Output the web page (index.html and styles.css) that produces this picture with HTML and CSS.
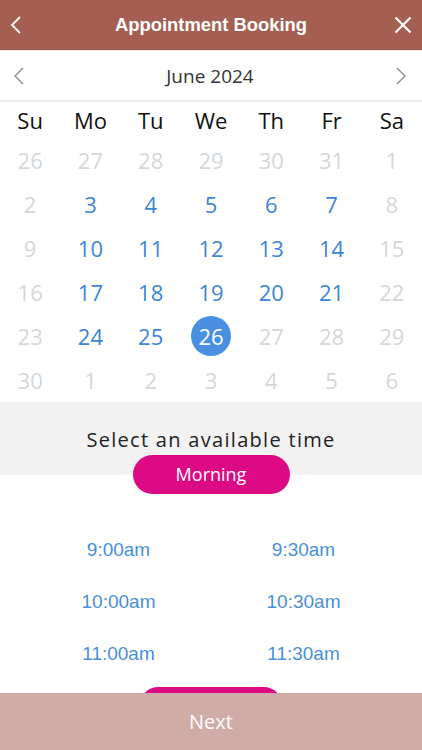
FILE: index.html
```html
<!DOCTYPE html>
<html lang="en">
<head>
  <meta charset="UTF-8" />
  <meta name="viewport" content="width=device-width, initial-scale=1" />
  <title>Appointment Booking</title>
  <link rel="stylesheet" href="styles.css">
</head>
<body>
  <!-- TOP BAR -->
  <header class="topbar">
    <span class="topbar-btn">
      <svg width="12" height="18" viewBox="0 0 12 18"><path d="M10 1 L2 9 L10 17" fill="none" stroke="#fff" stroke-width="1.8"/></svg>
    </span>
    <h1>Appointment Booking</h1>
    <span class="topbar-btn">
      <svg width="18" height="18" viewBox="0 0 18 18"><path d="M1.5 1.5 L16.5 16.5 M16.5 1.5 L1.5 16.5" fill="none" stroke="#fff" stroke-width="2.2"/></svg>
    </span>
  </header>

  <!-- MONTH SWITCHER -->
  <div class="month-bar">
    <span class="month-arrow">
      <svg width="10" height="18" viewBox="0 0 10 18"><path d="M9 1 L1 9 L9 17" fill="none" stroke="#8a8a8a" stroke-width="1.3"/></svg>
    </span>
    <span class="month-title">June 2024</span>
    <span class="month-arrow">
      <svg width="10" height="18" viewBox="0 0 10 18"><path d="M1 1 L9 9 L1 17" fill="none" stroke="#8a8a8a" stroke-width="1.3"/></svg>
    </span>
  </div>

  <!-- CALENDAR -->
  <div class="calendar">
    <div class="weekday">Su</div><div class="weekday">Mo</div><div class="weekday">Tu</div><div class="weekday">We</div><div class="weekday">Th</div><div class="weekday">Fr</div><div class="weekday">Sa</div>

    <div class="day off">26</div><div class="day off">27</div><div class="day off">28</div><div class="day off">29</div><div class="day off">30</div><div class="day off">31</div><div class="day off">1</div>
    <div class="day off">2</div><div class="day">3</div><div class="day">4</div><div class="day">5</div><div class="day">6</div><div class="day">7</div><div class="day off">8</div>
    <div class="day off">9</div><div class="day">10</div><div class="day">11</div><div class="day">12</div><div class="day">13</div><div class="day">14</div><div class="day off">15</div>
    <div class="day off">16</div><div class="day">17</div><div class="day">18</div><div class="day">19</div><div class="day">20</div><div class="day">21</div><div class="day off">22</div>
    <div class="day off">23</div><div class="day">24</div><div class="day">25</div><div class="day"><span class="selected">26</span></div><div class="day off">27</div><div class="day off">28</div><div class="day off">29</div>
    <div class="day off">30</div><div class="day off">1</div><div class="day off">2</div><div class="day off">3</div><div class="day off">4</div><div class="day off">5</div><div class="day off">6</div>
  </div>

  <!-- TIME PICKER -->
  <section class="times">
    <div class="times-head">Select an available time</div>
    <div class="pill">Morning</div>
    <div class="slots">
      <a class="slot">9:00am</a><a class="slot">9:30am</a>
      <a class="slot">10:00am</a><a class="slot">10:30am</a>
      <a class="slot">11:00am</a><a class="slot">11:30am</a>
    </div>
    <!-- next group, mostly under the Next bar -->
    <div class="pill pill-peek"></div>
  </section>

  <!-- NEXT -->
  <footer class="next-bar">Next</footer>
</body>
</html>
```

FILE: styles.css
```css
/* BASE */
html, body { margin: 0; height: 100%; overflow: hidden; }
body {
  font-family: 'Open Sans', sans-serif;
  background: #fff;
  color: #111;
}

/* TOP BAR */
.topbar {
  height: 50px;
  background: #a45f52;
  border-bottom: 1px solid #f4e0dc;
  display: flex;
  align-items: center;
  justify-content: space-between;
  padding: 0 10px;
}
.topbar h1 {
  margin: 0;
  font-family: 'Liberation Sans', Arial, sans-serif;
  font-weight: 700;
  font-size: 18.4px;
  color: #fff;
}
.topbar-btn { display: flex; width: 26px; justify-content: center; }
.topbar-btn:first-child { justify-content: flex-start; }
.topbar-btn:last-child { justify-content: flex-end; }

/* MONTH BAR */
.month-bar {
  height: 49px;
  border-bottom: 2px solid #ebebf0;
  display: flex;
  align-items: center;
  justify-content: space-between;
  padding: 0 16px 0 14px;
}
.month-arrow { display: flex; }
.month-title { font-size: 19px; color: #333; }

/* CALENDAR */
.calendar {
  display: grid;
  grid-template-columns: repeat(7, 1fr);
  grid-auto-rows: 44px;
  grid-template-rows: 36px;
  font-size: 22px;
  text-align: center;
}
.weekday { line-height: 36px; color: #111; }
.day {
  display: flex;
  align-items: center;
  justify-content: center;
  color: #3d85d6;
}
.day.off { color: #d3d7db; }
.selected {
  width: 40px; height: 40px;
  border-radius: 50%;
  background: #4a90e2;
  color: #fff;
  line-height: 40px;
}

/* TIMES */
.times-head {
  height: 73px;
  background: #f2f2f2;
  box-sizing: border-box;
  padding-top: 24px;
  text-align: center;
  font-size: 20px;
  letter-spacing: 1.3px;
  color: #222;
}
.pill {
  width: 157px;
  height: 39px;
  margin: -20px auto 0;
  border-radius: 20px;
  background: #dc0a85;
  color: #fff;
  font-size: 18px;
  line-height: 38px;
  text-align: center;
  position: relative;
}
.slots {
  display: grid;
  grid-template-columns: 1fr 1fr;
  grid-auto-rows: 52px;
  padding: 30px 26px 0;
}
.slot {
  font-family: 'Liberation Sans', Arial, sans-serif;
  font-size: 19px;
  color: #4a8fd8;
  text-align: center;
  line-height: 52px;
}
.pill-peek { margin-top: 7px; width: 144px; }

/* NEXT BAR */
.next-bar {
  position: fixed;
  left: 0; right: 0; bottom: 0;
  height: 57px;
  background: #cfada6;
  color: #fff;
  font-size: 20px;
  line-height: 58px;
  text-align: center;
  z-index: 2;
}
```
